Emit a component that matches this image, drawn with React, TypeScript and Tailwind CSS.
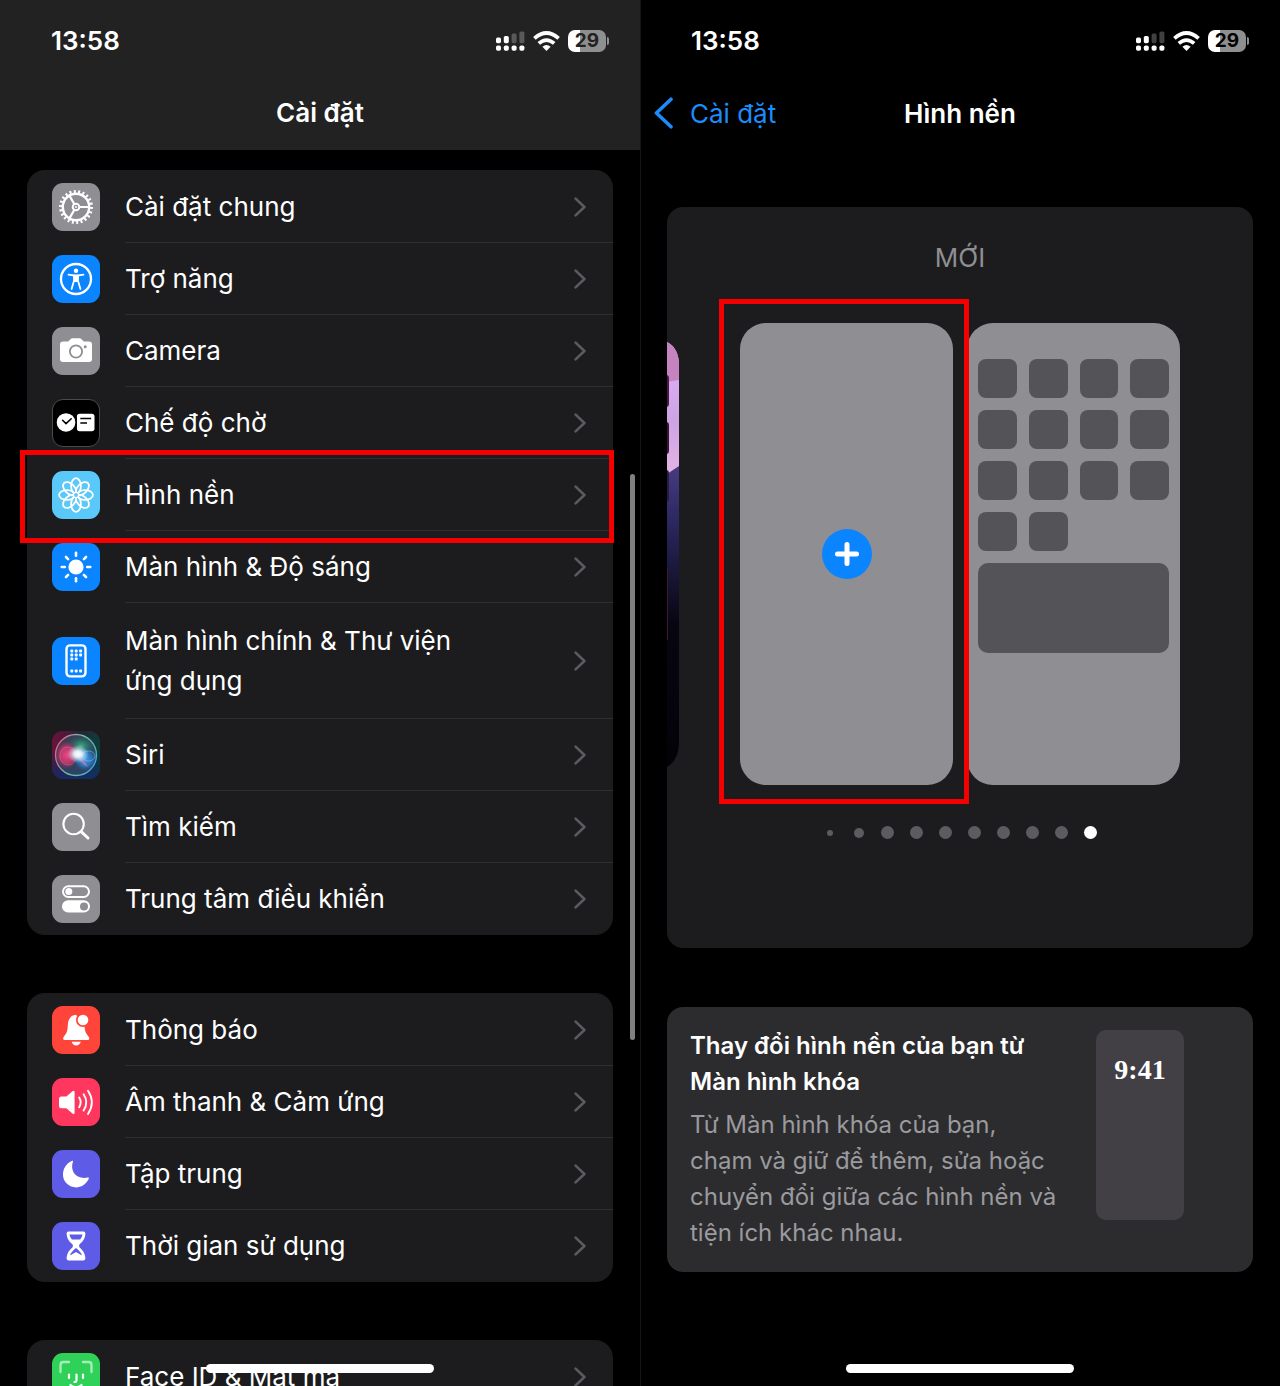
import React from "react";

type IconProps = { children: React.ReactNode; className?: string };

function Tile({ children, className = "" }: IconProps) {
  return (
    <span className={`block size-12 shrink-0 overflow-hidden rounded-[11px] ${className}`}>
      <svg viewBox="0 0 48 48" className="size-full" aria-hidden="true">
        {children}
      </svg>
    </span>
  );
}

const GearIcon = () => (
  <Tile className="bg-[#8e8e93]">
    <g fill="none" stroke="#fff">
      <circle cx="24" cy="24" r="13.2" strokeWidth="2.4" />
      <circle cx="24" cy="24" r="15.5" strokeWidth="3" pathLength="44" strokeDasharray="0.9 1.1" />
      <circle cx="24" cy="24" r="3.3" strokeWidth="2" />
      <path d="M27.2 24H37.2M22.4 21.2L17.4 12.6M22.4 26.8L17.4 35.4" strokeWidth="2.2" />
    </g>
    <circle cx="24" cy="24" r="1" fill="#fff" />
  </Tile>
);

const AccessibilityIcon = () => (
  <Tile className="bg-[#0a84ff]">
    <circle cx="24" cy="24" r="15" fill="none" stroke="#fff" strokeWidth="2.3" />
    <circle cx="24" cy="15.8" r="2.2" fill="#fff" />
    <path
      d="M16.5 19.6L22 20.5L22.2 25L19.6 34M31.5 19.6L26 20.5L25.8 25L28.4 34"
      fill="none"
      stroke="#fff"
      strokeWidth="1.8"
      strokeLinecap="round"
      strokeLinejoin="round"
    />
    <path d="M21.5 19.6H26.5L26.6 27H21.4Z" fill="#fff" />
  </Tile>
);

const CameraIcon = () => (
  <Tile className="bg-[#8e8e93]">
    <path
      d="M11 14.5H16.2L18.2 12.4Q19.2 11.3 20.6 11.3H27.4Q28.8 11.3 29.8 12.4L31.8 14.5H37Q40 14.5 40 17.5V32Q40 35 37 35H11Q8 35 8 32V17.5Q8 14.5 11 14.5Z"
      fill="#fff"
    />
    <circle cx="24" cy="24.5" r="6.1" fill="none" stroke="#8e8e93" strokeWidth="1.8" />
    <circle cx="33.2" cy="19.7" r="1.5" fill="#8e8e93" />
  </Tile>
);

const StandbyIcon = () => (
  <Tile className="border border-[#4a4a4c] bg-black">
    <circle cx="13.6" cy="23.4" r="9.7" fill="#fff" />
    <path d="M10 21.2L13.6 24.6L19 19.6" fill="none" stroke="#000" strokeWidth="1.6" strokeLinecap="round" strokeLinejoin="round" />
    <rect x="25" y="14.3" width="18.3" height="18.3" rx="2.8" fill="#fff" />
    <path d="M28.5 19.3H39.8M28.5 24H35.5" stroke="#000" strokeWidth="1.6" />
  </Tile>
);

const PETALS = [0, 45, 90, 135, 180, 225, 270, 315];

const FlowerIcon = () => (
  <Tile className="bg-[#5ac8f8]">
    <g fill="none" stroke="#fff" strokeWidth="1.8">
      {PETALS.map((angle) => (
        <ellipse key={angle} cx="24" cy="15" rx="4.9" ry="7.9" transform={`rotate(${angle} 24 24)`} />
      ))}
    </g>
    <circle cx="24" cy="24" r="2.6" fill="#5ac8f8" stroke="#fff" strokeWidth="1.3" />
  </Tile>
);

const SunIcon = () => (
  <Tile className="bg-[#0a84ff]">
    <circle cx="24" cy="24" r="7.6" fill="#fff" />
    <g stroke="#fff" strokeWidth="2.6" strokeLinecap="round">
      {PETALS.map((angle) => (
        <path key={angle} d="M24 9.8V12.8" transform={`rotate(${angle} 24 24)`} />
      ))}
    </g>
  </Tile>
);

const HOME_DOTS = [
  [19, 14], [23.4, 14], [27.8, 14],
  [19, 18], [23.4, 18], [27.8, 18],
  [19, 22], [23.4, 22],
  [19, 34], [23.4, 34], [27.8, 34],
];

const HomeScreenIcon = () => (
  <Tile className="bg-[#0a84ff]">
    <rect x="14.5" y="8.4" width="19" height="31" rx="3.6" fill="none" stroke="#fff" strokeWidth="2.4" />
    {HOME_DOTS.map(([x, y]) => (
      <rect key={`${x}-${y}`} x={x - 0.6} y={y - 1.4} width="2.8" height="2.8" rx="0.7" fill="#fff" />
    ))}
  </Tile>
);

const SiriIcon = () => (
  <Tile>
    <defs>
      <linearGradient id="siri-bg" x1="0" y1="0" x2="1" y2="0.35">
        <stop offset="0" stopColor="#74103a" />
        <stop offset="0.5" stopColor="#2a2338" />
        <stop offset="1" stopColor="#0b4038" />
      </linearGradient>
      <linearGradient id="siri-base" x1="0" y1="0" x2="0" y2="1">
        <stop offset="0.45" stopColor="#14265e" stopOpacity="0" />
        <stop offset="1" stopColor="#152a6c" stopOpacity="0.9" />
      </linearGradient>
      <linearGradient id="siri-ring" x1="0" y1="0.3" x2="1" y2="0.7">
        <stop offset="0" stopColor="#e0608c" />
        <stop offset="0.5" stopColor="#6cc0a0" />
        <stop offset="1" stopColor="#4aa4e4" />
      </linearGradient>
      <radialGradient id="siri-green">
        <stop offset="0" stopColor="#3fb08a" />
        <stop offset="1" stopColor="#1f6a5a" stopOpacity="0" />
      </radialGradient>
      <radialGradient id="siri-pink">
        <stop offset="0" stopColor="#f2467f" />
        <stop offset="0.6" stopColor="#d0386f" stopOpacity="0.8" />
        <stop offset="1" stopColor="#a81f5c" stopOpacity="0" />
      </radialGradient>
      <radialGradient id="siri-blue">
        <stop offset="0" stopColor="#4aa0f0" />
        <stop offset="0.6" stopColor="#2f80d8" stopOpacity="0.7" />
        <stop offset="1" stopColor="#1f62b8" stopOpacity="0" />
      </radialGradient>
      <radialGradient id="siri-glow">
        <stop offset="0" stopColor="#fff" />
        <stop offset="0.35" stopColor="#f2fbff" stopOpacity="0.9" />
        <stop offset="1" stopColor="#b8e8ff" stopOpacity="0" />
      </radialGradient>
    </defs>
    <rect width="48" height="48" fill="url(#siri-bg)" />
    <rect width="48" height="48" fill="url(#siri-base)" />
    <circle cx="24" cy="24" r="20.5" fill="#3c5468" fillOpacity="0.6" />
    <ellipse cx="29" cy="15" rx="15" ry="11" fill="url(#siri-green)" />
    <ellipse cx="15" cy="24" rx="12" ry="14" fill="url(#siri-pink)" />
    <ellipse cx="33" cy="28" rx="12" ry="12" fill="url(#siri-blue)" />
    <ellipse cx="16" cy="25" rx="8" ry="9" fill="none" stroke="#e06a9c" strokeOpacity="0.6" strokeWidth="0.8" />
    <ellipse cx="36.5" cy="25" rx="6.5" ry="5" fill="none" stroke="#8accff" strokeOpacity="0.6" strokeWidth="0.8" />
    <path d="M24 23Q31 26 36 36Q28 33 24 23Z" fill="#e88aa8" fillOpacity="0.5" />
    <ellipse cx="26" cy="23" rx="11" ry="9" fill="url(#siri-glow)" />
    <circle cx="24" cy="24" r="20.5" fill="none" stroke="url(#siri-ring)" strokeWidth="1.3" />
  </Tile>
);

const SearchIcon = () => (
  <Tile className="bg-[#8e8e93]">
    <circle cx="21.6" cy="21" r="10.2" fill="none" stroke="#fff" strokeWidth="2.1" />
    <path d="M29.4 28.8L36 35" stroke="#fff" strokeWidth="3" strokeLinecap="round" />
  </Tile>
);

const TogglesIcon = () => (
  <Tile className="bg-[#8e8e93]">
    <rect x="11" y="11.3" width="26" height="10.6" rx="5.3" fill="none" stroke="#fff" strokeWidth="2" />
    <circle cx="16.8" cy="16.6" r="3.5" fill="#fff" />
    <rect x="10" y="25.2" width="28" height="12.4" rx="6.2" fill="#fff" />
    <circle cx="32" cy="31.4" r="4" fill="#8e8e93" />
  </Tile>
);

const BellIcon = () => (
  <Tile className="bg-[#ff453a]">
    <path
      d="M24 8.8C17.8 9.4 16 14 15.8 19.5C15.6 25.5 14.4 27.6 12 30.4C10.4 32.4 11.2 34 13 34H35.4C37.2 34 38 32.4 36.4 30.4C34 27.6 32.8 25.5 32.4 19.5Z"
      fill="#fff"
    />
    <path d="M19.6 35.8H28.8Q27.6 39.4 24.2 39.4T19.6 35.8Z" fill="#fff" />
    <circle cx="31" cy="14" r="7" fill="#ff453a" />
    <circle cx="31" cy="14" r="5.3" fill="#fff" />
  </Tile>
);

const SpeakerIcon = () => (
  <Tile className="bg-[#ff375f]">
    <path
      d="M9.5 18.6H14.4L20.4 13.2Q22.6 11.8 22.6 14.2V34.6Q22.6 37 20.4 35.6L14.4 30.2H9.5Q7 30.2 7 27.7V21.1Q7 18.6 9.5 18.6Z"
      fill="#fff"
    />
    <g fill="none" stroke="#fff" strokeWidth="1.9" strokeLinecap="round">
      <path d="M27.2 19.6Q30.2 24.4 27.2 29.2" />
      <path d="M31.6 16.2Q37 24.4 31.6 32.6" />
      <path d="M36 12.8Q43.8 24.4 36 36" />
    </g>
  </Tile>
);

const MoonIcon = () => (
  <Tile className="bg-[#5e5ce6]">
    <path
      d="M20.4 10.8Q21.4 10.4 20.9 11.8C17.8 21 24 29.8 35.6 27.6Q37.4 27.2 36.8 28.8C32.2 38.4 21.4 40 14.8 33.6C8 26.8 10.8 14.4 20.4 10.8Z"
      fill="#fff"
    />
  </Tile>
);

const HourglassIcon = () => (
  <Tile className="bg-[#5e5ce6]">
    <path
      d="M16.4 9.6H31.6Q33.4 9.6 33.4 11.4C33 17.4 30.6 19.4 27.6 22.2Q26.4 23.8 27.6 25.4C30.6 28.2 33 30.4 33.4 36.6Q33.4 38.4 31.6 38.4H16.4Q14.6 38.4 14.6 36.6C15 30.4 17.4 28.2 20.4 25.4Q21.6 23.8 20.4 22.2C17.4 19.4 15 17.4 14.6 11.4Q14.6 9.6 16.4 9.6Z"
      fill="#fff"
    />
    <path d="M17.4 12.6H30.6Q29.8 16 28.2 17.4H19.8Q18.2 16 17.4 12.6Z" fill="#5e5ce6" />
    <path d="M24 26C21 28.6 18.6 30.6 18 33.6L24 30L30 33.6C29.4 30.6 27 28.6 24 26Z" fill="#5e5ce6" />
  </Tile>
);

const FaceIdIcon = () => (
  <Tile className="bg-[#30d158]">
    <g fill="none" stroke="#a5ecb6" strokeWidth="2.4" strokeLinecap="round">
      <path d="M8.5 19V12Q8.5 9 11.5 9H17M31 9H36.5Q39.5 9 39.5 12V19M8.5 38V44M39.5 38V44" />
    </g>
    <g fill="none" stroke="#fff" strokeWidth="2.2" strokeLinecap="round">
      <path d="M17 21.5V25M31 21.5V25M24.5 21.5V27Q24.5 29 22.5 29M18.5 32Q24 36.5 29.5 32" />
    </g>
  </Tile>
);

const Chevron = () => (
  <svg viewBox="0 0 12 20" className="h-5 w-3 shrink-0" fill="none" stroke="#5b5b5f" strokeWidth="2.6" strokeLinecap="round" strokeLinejoin="round" aria-hidden="true">
    <path d="M1.6 1.6L10.4 10L1.6 18.4" />
  </svg>
);

function StatusBar({ batteryInk }: { batteryInk: string }) {
  return (
    <div className="flex h-[82px] items-center justify-between pr-[31px] pl-[51px]">
      <span className="text-[26px] leading-8 font-semibold">13:58</span>
      <div className="flex items-center">
        <svg viewBox="0 0 29 20" className="mr-2 h-5 w-[29px]" fill="#fff" aria-label="Tín hiệu di động">
          <rect x="0" y="6.6" width="5" height="5.6" rx="1.6" />
          <rect x="7.8" y="5" width="5" height="7.2" rx="1.6" />
          <rect x="15.6" y="2.4" width="5" height="9.8" rx="1.6" fillOpacity="0.25" />
          <rect x="23.4" y="0.6" width="5" height="11.6" rx="1.6" fillOpacity="0.25" />
          <rect x="0" y="14.4" width="5" height="5.4" rx="1.8" />
          <rect x="7.8" y="14.4" width="5" height="5.4" rx="1.8" />
          <rect x="15.6" y="14.4" width="5" height="5.4" rx="1.8" />
          <rect x="23.4" y="14.4" width="5" height="5.4" rx="1.8" />
        </svg>
        <svg viewBox="0 0 27 20" className="mr-2 h-5 w-[27px]" fill="none" stroke="#fff" strokeWidth="3.8" aria-label="Wi-Fi">
          <path d="M1.4 7.4Q13.5 -3.2 25.6 7.4" />
          <path d="M5.8 12.4Q13.5 5.8 21.2 12.4" />
          <path d="M9.4 15.8Q13.5 12.2 17.6 15.8L13.5 20Z" fill="#fff" stroke="none" />
        </svg>
        <span className={`flex h-[22px] w-[38px] items-center justify-center rounded-[7px] bg-linear-to-r from-white from-32% to-[#8f8f8f] to-32% text-[19px] leading-[22px] font-bold ${batteryInk}`}>
          29
        </span>
        <span className="ml-px h-2 w-0.5 rounded-r-full bg-[#8f8f8f]" />
      </div>
    </div>
  );
}

type RowItem = { label: string; icon: React.ReactNode; tall?: boolean; highlighted?: boolean };

const GROUPS: RowItem[][] = [
  [
    { label: "Cài đặt chung", icon: <GearIcon /> },
    { label: "Trợ năng", icon: <AccessibilityIcon /> },
    { label: "Camera", icon: <CameraIcon /> },
    { label: "Chế độ chờ", icon: <StandbyIcon /> },
    { label: "Hình nền", icon: <FlowerIcon />, highlighted: true },
    { label: "Màn hình & Độ sáng", icon: <SunIcon /> },
    { label: "Màn hình chính & Thư viện ứng dụng", icon: <HomeScreenIcon />, tall: true },
    { label: "Siri", icon: <SiriIcon /> },
    { label: "Tìm kiếm", icon: <SearchIcon /> },
    { label: "Trung tâm điều khiển", icon: <TogglesIcon /> },
  ],
  [
    { label: "Thông báo", icon: <BellIcon /> },
    { label: "Âm thanh & Cảm ứng", icon: <SpeakerIcon /> },
    { label: "Tập trung", icon: <MoonIcon /> },
    { label: "Thời gian sử dụng", icon: <HourglassIcon /> },
  ],
  [{ label: "Face ID & Mật mã", icon: <FaceIdIcon /> }],
];

function Row({ item, last }: { item: RowItem; last: boolean }) {
  return (
    <li className="relative">
      <button type="button" className="flex w-full items-center gap-[25px] pl-[25px] text-left">
        {item.icon}
        <span
          className={`flex flex-1 items-center justify-between pr-[27px] ${item.tall ? "min-h-[116px]" : "min-h-[72px]"} ${last ? "" : "border-b border-[#2f2f31]"}`}
        >
          <span className="max-w-[350px] text-[26px] leading-10">{item.label}</span>
          <Chevron />
        </span>
      </button>
      {item.highlighted && (
        <span className="pointer-events-none absolute -top-[9px] -right-px -bottom-3 -left-[7px] z-10 border-5 border-[#f50000]" />
      )}
    </li>
  );
}

const HomeIndicator = () => (
  <span className="absolute bottom-[13px] left-1/2 h-[9px] w-[228px] -translate-x-1/2 rounded-full bg-white" />
);

function SettingsScreen() {
  return (
    <section className="relative flex h-screen flex-col overflow-hidden bg-black">
      <header className="shrink-0 bg-[#222222]">
        <StatusBar batteryInk="text-[#222222]" />
        <h1 className="h-[68px] text-center text-[26px] leading-[62px] font-semibold">Cài đặt</h1>
      </header>
      <div className="flex flex-col gap-[58px] px-[27px] pt-5">
        {GROUPS.map((group) => (
          <ul key={group[0].label} className="rounded-[18px] bg-[#1c1c1e] pt-px">
            {group.map((item, i) => (
              <Row key={item.label} item={item} last={i === group.length - 1} />
            ))}
          </ul>
        ))}
      </div>
      <span className="absolute top-[474px] right-[5px] h-[566px] w-[5px] rounded-full bg-[#808080]" />
      <HomeIndicator />
    </section>
  );
}

const PreviousWallpaper = () => (
  <svg viewBox="0 0 12 426" className="absolute top-[19px] left-0 h-[426px] w-3" aria-hidden="true">
    <defs>
      <clipPath id="edge">
        <path d="M0 0Q12 6 12 24V400Q12 418 0 425Z" />
      </clipPath>
      <linearGradient id="night" x1="0" y1="0" x2="0" y2="1">
        <stop offset="0.28" stopColor="#4a3d84" />
        <stop offset="0.42" stopColor="#2b2860" />
        <stop offset="0.66" stopColor="#080512" />
        <stop offset="1" stopColor="#030208" />
      </linearGradient>
      <linearGradient id="lilac" x1="0" y1="0" x2="0" y2="1">
        <stop offset="0" stopColor="#e3b2fb" />
        <stop offset="0.6" stopColor="#cda3e4" />
        <stop offset="1" stopColor="#e3b4e4" />
      </linearGradient>
    </defs>
    <g clipPath="url(#edge)">
      <rect width="12" height="426" fill="url(#night)" />
      <path d="M0 0H12V124L0 132Z" fill="url(#lilac)" />
      <path d="M0 0H12V38L0 40Z" fill="#c583c0" />
      <rect x="-4" y="33" width="6" height="32" rx="3" fill="#4a1746" />
      <rect x="-4" y="80" width="6" height="32" rx="3" fill="#3a1238" />
      <rect x="-4" y="128" width="6" height="32" rx="3" fill="#2a1a44" />
      <rect x="0" y="226" width="1" height="72" fill="#3c1c30" />
    </g>
  </svg>
);

const DOTS = [
  "size-1.5 bg-[#5c5c60]",
  "size-2.5 bg-[#5c5c60]",
  "size-[13px] bg-[#5c5c60]",
  "size-[13px] bg-[#5c5c60]",
  "size-[13px] bg-[#5c5c60]",
  "size-[13px] bg-[#5c5c60]",
  "size-[13px] bg-[#5c5c60]",
  "size-[13px] bg-[#5c5c60]",
  "size-[13px] bg-[#5c5c60]",
  "size-[13px] bg-white",
];

const APP_SLOTS = Array.from({ length: 14 }, (_, i) => i);

function WallpaperScreen() {
  return (
    <section className="relative flex h-screen flex-col overflow-hidden bg-black shadow-[inset_1px_0_0_#161616]">
      <header className="shrink-0">
        <StatusBar batteryInk="text-black" />
        <div className="grid h-[62px] grid-cols-[1fr_auto_1fr] items-center">
          <button type="button" className="flex items-center gap-4 pl-[14px] text-[26px] text-[#1c8cfb]">
            <svg viewBox="0 0 20 32" className="h-8 w-5" fill="none" stroke="currentColor" strokeWidth="3.6" strokeLinecap="round" strokeLinejoin="round" aria-hidden="true">
              <path d="M17 2.2L2.4 16L17 29.8" />
            </svg>
            Cài đặt
          </button>
          <h1 className="text-[26px] font-semibold">Hình nền</h1>
        </div>
      </header>

      <div className="mx-[27px] mt-[63px] overflow-hidden rounded-2xl bg-[#1c1c1e] pb-[109px]">
        <h2 className="pt-[31px] pb-[45px] text-center text-[26px] leading-10 text-[#8e8e93]">MỚI</h2>
        <div className="relative flex justify-center gap-[14px]">
          <PreviousWallpaper />
          <div className="relative">
            <button type="button" aria-label="Thêm hình nền mới" className="flex h-[462px] w-[213px] items-center justify-center rounded-[26px] bg-[#8e8e93]">
              <span className="flex size-[50px] items-center justify-center rounded-full bg-[#0a84ff]">
                <svg viewBox="0 0 24 24" className="size-6" stroke="#fff" strokeWidth="5" strokeLinecap="round" aria-hidden="true">
                  <path d="M12 2.5V21.5M2.5 12H21.5" />
                </svg>
              </span>
            </button>
            <span className="pointer-events-none absolute -top-6 -right-4 -bottom-[19px] -left-[21px] z-10 border-5 border-[#f50000]" />
          </div>
          <div className="h-[462px] w-[213px] rounded-[26px] bg-[#8e8e93] px-[11px] pt-9">
            <div className="grid grid-cols-4 gap-3">
              {APP_SLOTS.map((slot) => (
                <span key={slot} className="h-[39px] rounded-lg bg-[#545357]" />
              ))}
            </div>
            <div className="mt-3 h-[90px] rounded-[10px] bg-[#545357]" />
          </div>
        </div>
        <div className="mt-[41px] flex h-[13px] justify-center">
          {DOTS.map((dot, i) => (
            <span key={i} className="flex w-[29px] items-center justify-center">
              <span className={`rounded-full ${dot}`} />
            </span>
          ))}
        </div>
      </div>

      <div className="mx-[27px] mt-[59px] flex items-start justify-between rounded-2xl bg-[#2c2c2e] pt-[21px] pr-[69px] pb-[21px] pl-[23px]">
        <div className="max-w-[372px]">
          <h2 className="text-2xl leading-9 font-semibold">Thay đổi hình nền của bạn từ Màn hình khóa</h2>
          <p className="mt-[7px] text-2xl leading-9 text-[#9a9a9f]">
            Từ Màn hình khóa của bạn, chạm và giữ để thêm, sửa hoặc chuyển đổi giữa các hình nền và tiện ích khác nhau.
          </p>
        </div>
        <div className="mt-0.5 h-[190px] w-[88px] rounded-[10px] bg-[#424045] pt-[22px] text-center font-['Liberation_Serif',serif] text-[28px] leading-9 font-bold">
          9:41
        </div>
      </div>
      <HomeIndicator />
    </section>
  );
}

export default function App() {
  return (
    <main className="grid grid-cols-2 bg-black font-['Inter',sans-serif] text-white">
      <SettingsScreen />
      <WallpaperScreen />
    </main>
  );
}
